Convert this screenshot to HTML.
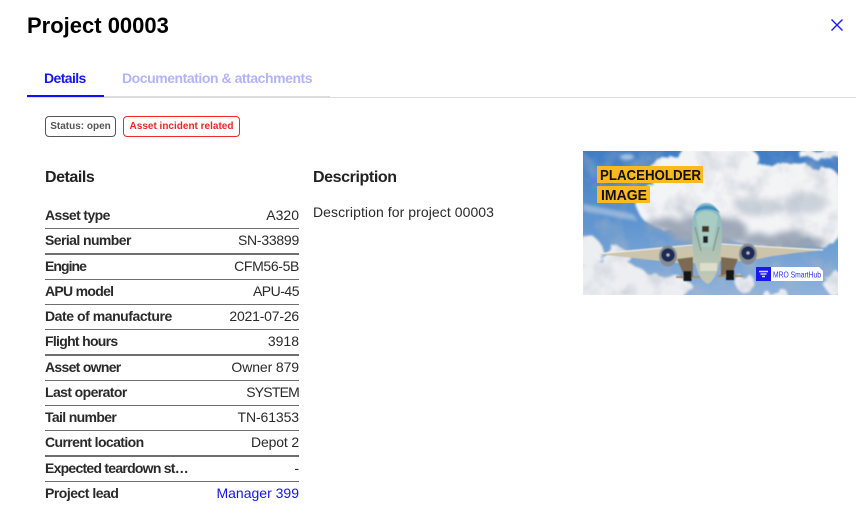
<!DOCTYPE html>
<html><head><meta charset="utf-8">
<style>
html,body{margin:0;padding:0;background:#fff;width:862px;height:523px;overflow:hidden}
body{position:relative;font-family:"Liberation Sans",Arial,sans-serif;color:#1c1c1c}
.a{position:absolute;white-space:nowrap}
.row{position:absolute;left:45px;width:254px;font-size:14px;height:18px;line-height:18px}
.row b{position:absolute;left:0;top:0;font-weight:700;color:#2a2a2a}
.row span{position:absolute;right:0;top:0;color:#2a2a2a}
.ln{position:absolute;left:45px;width:254px;height:1px;background:#6f6f6f}
.th{height:2px}
</style></head><body>
<div class="a" style="left:27px;top:13px;font-size:22px;line-height:26px;font-weight:700;color:#000;">Project 00003</div>
<svg class="a" style="left:830px;top:18px" width="14" height="14" viewBox="0 0 14 14"><path d="M1.5 1.5L12.5 12.5M12.5 1.5L1.5 12.5" stroke="#1a1aff" stroke-width="1.4" fill="none"/></svg>

<div class="a" style="left:44px;top:70px;font-size:14px;line-height:17px;font-weight:700;color:#1616f5;letter-spacing:-.6px">Details</div>
<div class="a" style="left:122px;top:70px;font-size:14px;line-height:17px;font-weight:700;color:#b3b3fb;letter-spacing:-.45px">Documentation &amp; attachments</div>
<div class="a" style="left:27px;top:97px;width:829px;height:1px;background:#dcdcdc"></div>
<div class="a" style="left:27px;top:95px;width:77px;height:2px;background:#1010f5"></div>
<div class="a" style="left:104px;top:96px;width:226px;height:1px;background:#dcdcdc"></div>

<div class="a" style="left:45px;top:116px;width:69px;height:19px;border:1px solid #555;border-radius:4px;font-size:10px;line-height:20px;font-weight:700;color:#555;text-align:center">Status: open</div>
<div class="a" style="left:123px;top:116px;width:115px;height:19px;border:1px solid #ee2a2a;border-radius:4px;font-size:10px;line-height:20px;font-weight:700;color:#e82626;text-align:center">Asset incident related</div>

<div class="a" style="left:45px;top:168px;font-size:16px;line-height:19px;font-weight:700;color:#222;letter-spacing:-.45px">Details</div>
<div class="a" style="left:313px;top:168px;font-size:16px;line-height:19px;font-weight:700;color:#222;letter-spacing:-.4px">Description</div>
<div class="a" style="left:313px;top:204px;font-size:14px;line-height:17px;color:#2a2a2a;letter-spacing:.07px">Description for project 00003</div>

<div class="row" style="top:206px"><b style="letter-spacing:-.6px">Asset type</b><span>A320</span></div><div class="ln" style="top:228px"></div>
<div class="row" style="top:231px"><b style="letter-spacing:-.58px">Serial number</b><span style="letter-spacing:-.25px">SN-33899</span></div><div class="ln th" style="top:253px"></div>
<div class="row" style="top:257px"><b style="letter-spacing:-.95px">Engine</b><span style="letter-spacing:-.35px">CFM56-5B</span></div><div class="ln" style="top:279px"></div>
<div class="row" style="top:282px"><b style="letter-spacing:-.7px">APU model</b><span style="letter-spacing:-.5px">APU-45</span></div><div class="ln" style="top:304px"></div>
<div class="row" style="top:307px"><b style="letter-spacing:-.45px">Date of manufacture</b><span style="letter-spacing:-.2px">2021-07-26</span></div><div class="ln" style="top:329px"></div>
<div class="row" style="top:332px"><b style="letter-spacing:-.7px">Flight hours</b><span>3918</span></div><div class="ln th" style="top:354px"></div>
<div class="row" style="top:358px"><b style="letter-spacing:-.7px">Asset owner</b><span style="letter-spacing:-.1px">Owner 879</span></div><div class="ln" style="top:380px"></div>
<div class="row" style="top:383px"><b style="letter-spacing:-.6px">Last operator</b><span style="letter-spacing:-.8px">SYSTEM</span></div><div class="ln" style="top:405px"></div>
<div class="row" style="top:408px"><b style="letter-spacing:-.65px">Tail number</b><span style="letter-spacing:-.1px">TN-61353</span></div><div class="ln" style="top:430px"></div>
<div class="row" style="top:433px"><b style="letter-spacing:-.6px">Current location</b><span style="letter-spacing:-.15px">Depot 2</span></div><div class="ln th" style="top:455px"></div>
<div class="row" style="top:459px"><b style="letter-spacing:-.75px">Expected teardown st…</b><span>-</span></div><div class="ln" style="top:481px"></div>
<div class="row" style="top:484px"><b style="letter-spacing:-.5px">Project lead</b><span style="color:#1414f0">Manager 399</span></div>

<svg class="a" style="left:583px;top:151px" width="255" height="144" viewBox="0 0 255 144">
<defs>
<linearGradient id="sky" x1="0" y1="0" x2="0" y2="1"><stop offset="0" stop-color="#3f7dc6"/><stop offset=".5" stop-color="#5f95d0"/><stop offset="1" stop-color="#8fb2da"/></linearGradient>
<linearGradient id="fus" x1="0" y1="0" x2="0" y2="1"><stop offset="0" stop-color="#7fb9cc"/><stop offset=".4" stop-color="#a3bfb6"/><stop offset="1" stop-color="#c6c8b2"/></linearGradient>
<filter id="puff" x="-20%" y="-20%" width="140%" height="140%"><feTurbulence type="fractalNoise" baseFrequency=".07" numOctaves="3" seed="4" result="n"/><feDisplacementMap in="SourceGraphic" in2="n" scale="14"/><feGaussianBlur stdDeviation="1.1"/></filter>
<filter id="soft" x="-30%" y="-30%" width="160%" height="160%"><feTurbulence type="fractalNoise" baseFrequency=".05" numOctaves="2" seed="9" result="n"/><feDisplacementMap in="SourceGraphic" in2="n" scale="12"/><feGaussianBlur stdDeviation="3.5"/></filter>
<filter id="tex" x="0" y="0" width="100%" height="100%"><feTurbulence type="fractalNoise" baseFrequency=".045" numOctaves="4" seed="12"/><feColorMatrix type="matrix" values="0 0 0 0 .42  0 0 0 0 .47  0 0 0 0 .55  1.9 0 0 0 -.82"/><feGaussianBlur stdDeviation=".8"/></filter>
<filter id="b1"><feGaussianBlur stdDeviation=".4"/></filter>
<filter id="b2" x="-20%" y="-100%" width="140%" height="300%"><feGaussianBlur stdDeviation="1.6"/></filter>
<clipPath id="c"><rect width="255" height="144"/></clipPath>
</defs>
<g clip-path="url(#c)">
<rect width="255" height="144" fill="url(#sky)"/>
<path d="M0 53L50 63L55 70L0 60Z" fill="#a9c4e4" filter="url(#b2)" opacity=".7"/>
<ellipse cx="44" cy="6" rx="7" ry="3" fill="#a9c4e4" filter="url(#b2)"/>
<g filter="url(#puff)" fill="#f3f4f6">
<ellipse cx="115" cy="22" rx="50" ry="24"/>
<ellipse cx="140" cy="12" rx="38" ry="20"/>
<ellipse cx="95" cy="55" rx="42" ry="24"/>
<ellipse cx="140" cy="55" rx="55" ry="32"/>
<ellipse cx="205" cy="42" rx="52" ry="30"/>
<ellipse cx="185" cy="72" rx="50" ry="24"/>
<ellipse cx="240" cy="55" rx="24" ry="40"/>
<ellipse cx="242" cy="3" rx="28" ry="5"/>
</g>
<g filter="url(#soft)" fill="#98a3b3" opacity=".95">
<ellipse cx="125" cy="80" rx="40" ry="15"/><ellipse cx="85" cy="74" rx="22" ry="6"/><ellipse cx="200" cy="90" rx="42" ry="9"/>
<ellipse cx="225" cy="52" rx="22" ry="10" opacity=".45"/><ellipse cx="175" cy="55" rx="24" ry="10" opacity=".45"/>
</g>
<g filter="url(#puff)" fill="#eceef1">
<ellipse cx="5" cy="100" rx="13" ry="16"/>
<ellipse cx="33" cy="108" rx="15" ry="11"/>
<ellipse cx="25" cy="130" rx="42" ry="20"/>
<ellipse cx="75" cy="136" rx="34" ry="13"/>
<ellipse cx="162" cy="132" rx="9" ry="10"/>
<ellipse cx="194" cy="146" rx="14" ry="7"/>
<ellipse cx="252" cy="133" rx="10" ry="12"/>
</g>
<rect width="255" height="144" filter="url(#tex)" opacity=".55"/>
<g filter="url(#b1)">
<path d="M12 103L110 95L113 112L84 112L77 110L42 106Z" fill="#cdc5ab"/>
<path d="M12 103L110 94" stroke="#f0f0ec" stroke-width="1.2"/>
<path d="M240 99L138 94L136 110L165 110L190 105L212 102Z" fill="#cdc5ab"/>
<path d="M240 99L138 93" stroke="#f0efe8" stroke-width="1.2"/>
<path d="M93 126H117M135 125H160" stroke="#a58f6c" stroke-width="2"/>
<path d="M94 108L110 106V126L100 122Z" fill="#7d6b52"/>
<path d="M155 108L138 106V125L150 120Z" fill="#7d6b52"/>
<rect x="100.500" y="120" width="8" height="10" fill="#141414"/>
<rect x="143" y="119" width="8" height="10" fill="#141414"/>
<path d="M123 52C113 52 109 64 109 80C109 105 113 128 125 133C135 128 139 105 139 80C139 64 134 52 123 52Z" fill="url(#fus)"/>
<path d="M113 66C116 58 131 58 135 66L129 96H119Z" fill="#a9cdc3"/>
<path d="M111 62C116 52 131 52 137 62C130 57 118 57 111 62Z" fill="#3f8dbf"/>
<path d="M112 76L118 100M136 76L130 100" stroke="#6d8d88" stroke-width="1"/>
<rect x="119" y="75" width="7" height="6" fill="#4a3628"/><rect x="120" y="85" width="5" height="7" fill="#1f2327"/>
<rect x="117" y="112" width="17" height="8" fill="#dedcca"/>
<ellipse cx="85" cy="105" rx="9" ry="10.500" fill="#868d92"/><circle cx="85" cy="104" r="6.800" fill="#1f2c55"/><circle cx="85" cy="104" r="1.500" fill="#bcbccb"/>
<ellipse cx="165" cy="103" rx="9" ry="10.500" fill="#868d92"/><circle cx="165" cy="102" r="6.800" fill="#1f2c55"/><circle cx="165" cy="102" r="1.500" fill="#bcbccb"/>
</g>
<rect x="14" y="15" width="106" height="17" fill="#f9b91f"/>
<rect x="14" y="35" width="53" height="17" fill="#f9b91f"/>
<text x="17" y="29" font-family="Liberation Sans,sans-serif" font-size="15" font-weight="700" fill="#111" textLength="101" lengthAdjust="spacingAndGlyphs">PLACEHOLDER</text>
<text x="18" y="49" font-family="Liberation Sans,sans-serif" font-size="15" font-weight="700" fill="#111" textLength="46" lengthAdjust="spacingAndGlyphs">IMAGE</text>
<path d="M173 116H236L240 120V130H173Z" fill="#fff"/>
<rect x="173" y="116" width="15" height="14" fill="#1818ee"/>
<path d="M176 120.500H185M177.500 123H183.500M179 125.500H182" stroke="#cfd0ff" stroke-width="1.400"/>
<text x="190" y="126.500" font-family="Liberation Sans,sans-serif" font-size="8.500" fill="#2a2af0" textLength="48" lengthAdjust="spacingAndGlyphs">MRO SmartHub</text>
</g>
</svg>
</body></html>
